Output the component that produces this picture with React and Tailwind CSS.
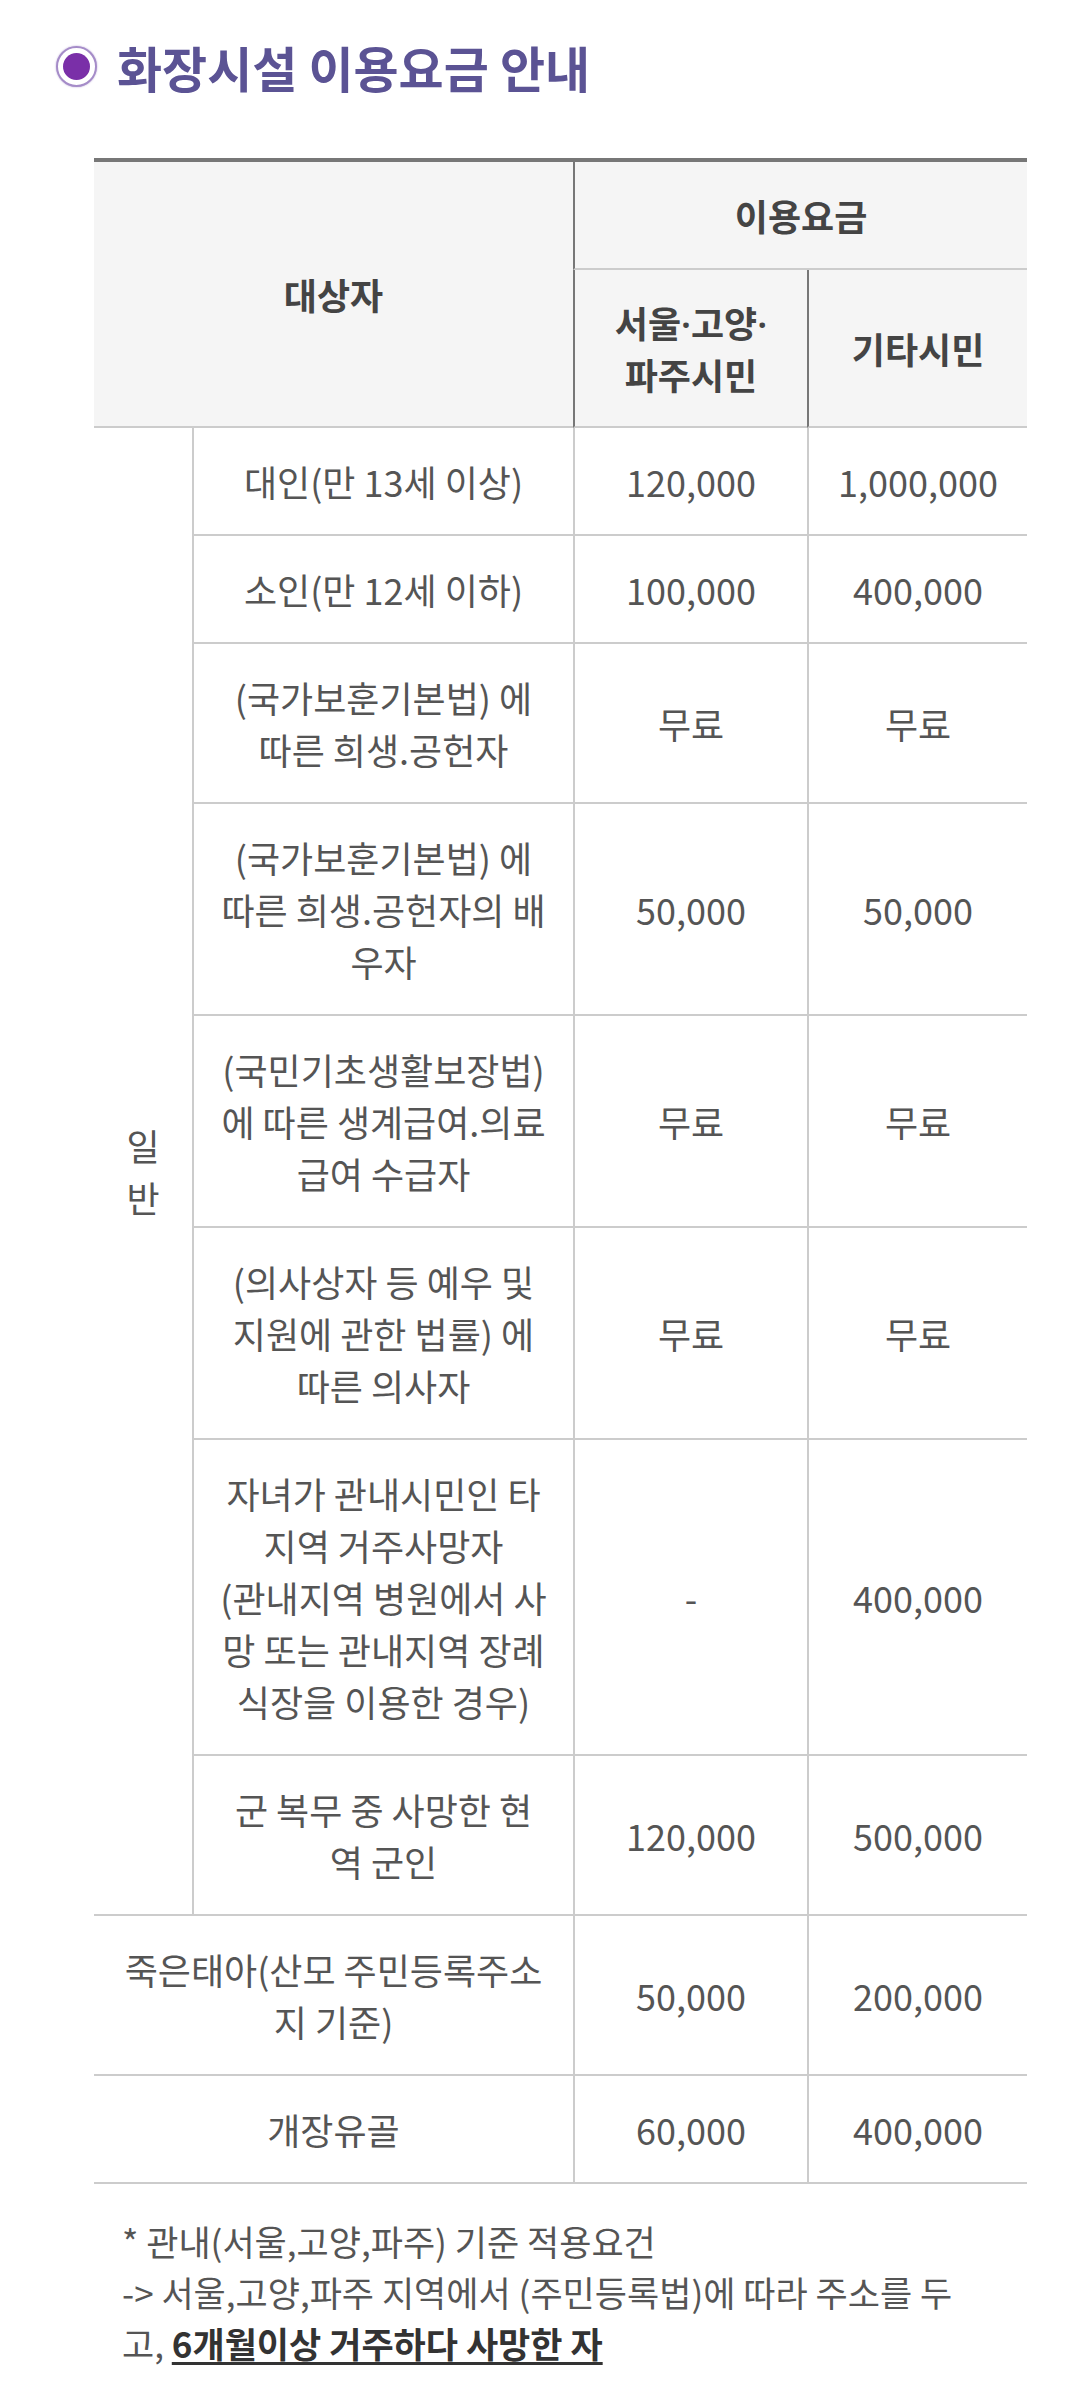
import React from "react";

const rows = [
    {label: ["대인(만 13세 이상)"], local: "120,000", other: "1,000,000"},
    {label: ["소인(만 12세 이하)"], local: "100,000", other: "400,000"},
    {label: ["(국가보훈기본법) 에", "따른 희생.공헌자"], local: "무료", other: "무료"},
    {label: ["(국가보훈기본법) 에", "따른 희생.공헌자의 배", "우자"], local: "50,000", other: "50,000"},
    {label: ["(국민기초생활보장법)", "에 따른 생계급여.의료", "급여 수급자"], local: "무료", other: "무료"},
    {label: ["(의사상자 등 예우 및", "지원에 관한 법률) 에", "따른 의사자"], local: "무료", other: "무료"},
    {
        label: ["자녀가 관내시민인 타", "지역 거주사망자", "(관내지역 병원에서 사", "망 또는 관내지역 장례", "식장을 이용한 경우)"],
        local: "-",
        other: "400,000"
    },
    {label: ["군 복무 중 사망한 현", "역 군인"], local: "120,000", other: "500,000"},
];

const extraRows = [
    {label: ["죽은태아(산모 주민등록주소", "지 기준)"], local: "50,000", other: "200,000"},
    {label: ["개장유골"], local: "60,000", other: "400,000"},
];

const Lines = ({lines}) => (
    <>
        {lines.map((l, i) => (
            <span key={i} className="block whitespace-nowrap">{l}</span>
        ))}
    </>
);

const cell = "border-b-2 border-[#cccccc] py-[27px] text-center align-middle";

const Dot = () => <span className="font-['Noto_Sans'] leading-none">·</span>;

const App = () => {
    return (
        <div className="min-h-[2385px] bg-white pt-[37px] text-[#555555]"
             style={{fontFamily: '"Noto Sans CJK KR", "Noto Sans", sans-serif'}}>

            {/* title */}
            <div className="flex items-center pl-[56px] gap-[20px]">
                <span className="flex h-[41px] w-[41px] items-center justify-center rounded-full border-2 border-[#a58cc8] bg-white shadow-[0_0_2px_#b9a6d6]">
                    <span className="h-[27px] w-[27px] rounded-full bg-[#7a2fa8]"></span>
                </span>
                <h2 className="text-[49px] font-bold leading-[59px] text-[#5b5394]">화장시설 이용요금 안내</h2>
            </div>

            {/* fee table */}
            <table className="mt-[62px] ml-[94px] w-[933px] table-fixed border-separate border-spacing-0 border-t-4 border-[#777777] text-[36px] leading-[52px]">
                <colgroup>
                    <col className="w-[98px]"/>
                    <col className="w-[381px]"/>
                    <col className="w-[234px]"/>
                    <col className="w-[220px]"/>
                </colgroup>
                <thead className="bg-[#f5f5f5] font-semibold text-[#444444]">
                <tr>
                    <th colSpan={2} rowSpan={2} className="border-b-2 border-[#cccccc] text-center align-middle font-semibold">
                        대상자
                    </th>
                    <th colSpan={2} className="h-[108px] border-b-2 border-l-2 border-b-[#cccccc] border-l-[#777777] text-center align-middle font-semibold">
                        이용요금
                    </th>
                </tr>
                <tr>
                    <th className="h-[158px] border-b-2 border-l-2 border-b-[#cccccc] border-l-[#777777] text-center align-middle font-semibold">
                        <span className="block h-[52px] whitespace-nowrap">서울<Dot/>고양<Dot/></span>
                        <span className="block h-[52px] whitespace-nowrap">파주시민</span>
                    </th>
                    <th className="border-b-2 border-l-2 border-b-[#cccccc] border-l-[#777777] text-center align-middle font-semibold">
                        기타시민
                    </th>
                </tr>
                </thead>
                <tbody>
                {rows.map((r, i) => (
                    <tr key={i}>
                        {i === 0 && (
                            <td rowSpan={rows.length} className="border-b-2 border-[#cccccc] text-center align-middle">
                                <Lines lines={["일", "반"]}/>
                            </td>
                        )}
                        <td className={`${cell} border-l-2`}><Lines lines={r.label}/></td>
                        <td className={`${cell} border-l-2`}>{r.local}</td>
                        <td className={`${cell} border-l-2`}>{r.other}</td>
                    </tr>
                ))}
                {extraRows.map((r, i) => (
                    <tr key={`x${i}`}>
                        <td colSpan={2} className={cell}><Lines lines={r.label}/></td>
                        <td className={`${cell} border-l-2`}>{r.local}</td>
                        <td className={`${cell} border-l-2`}>{r.other}</td>
                    </tr>
                ))}
                </tbody>
            </table>

            {/* note */}
            <div className="mt-[31px] ml-[122px] text-[35px] leading-[51px] text-[#555555]">
                <p className="whitespace-nowrap">* 관내(서울,고양,파주) 기준 적용요건</p>
                <p className="whitespace-nowrap">-&gt; 서울,고양,파주 지역에서 (주민등록법)에 따라 주소를 두</p>
                <p className="whitespace-nowrap">
                    고, <u className="font-bold text-[#333333] underline-offset-4">6개월이상 거주하다 사망한 자</u>
                </p>
            </div>
        </div>
    );
};

export default App;
